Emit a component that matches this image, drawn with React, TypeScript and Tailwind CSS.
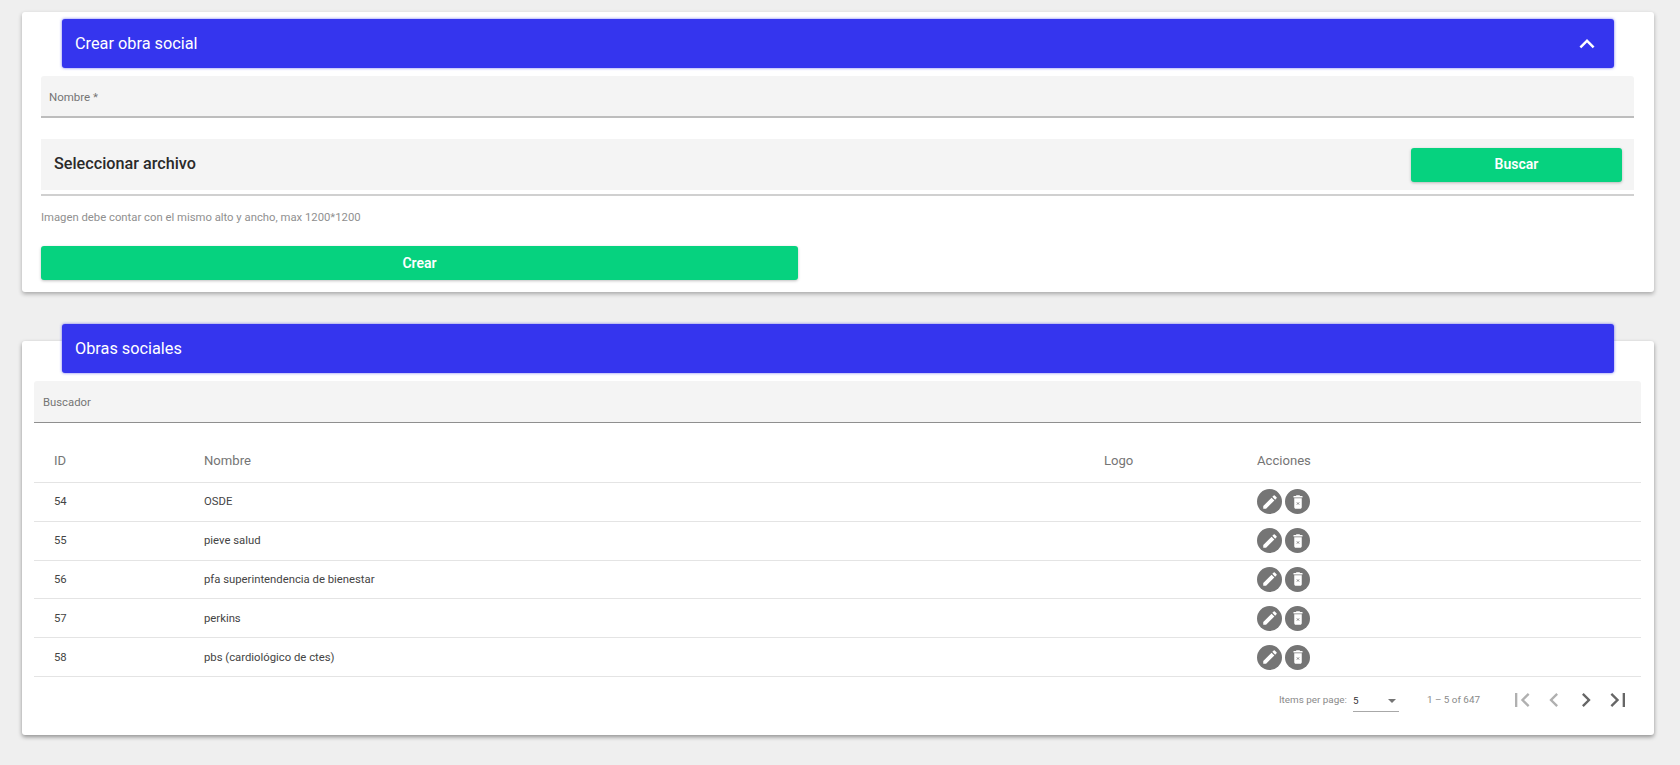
import { MdEdit, MdExpandLess, MdFirstPage, MdChevronLeft, MdChevronRight, MdLastPage } from 'react-icons/md';

const rows = [
  { id: 54, nombre: 'OSDE' },
  { id: 55, nombre: 'pieve salud' },
  { id: 56, nombre: 'pfa superintendencia de bienestar' },
  { id: 57, nombre: 'perkins' },
  { id: 58, nombre: 'pbs (cardiológico de ctes)' },
];

function TrashIcon() {
  return (
    <svg viewBox="0 0 24 24" className="w-[18px] h-[18px]">
      <path fill="white" d="M7 19c0 1.1.9 2 2 2h6c1.1 0 2-.9 2-2V7H7v12zM15 4l-1-1h-4l-1 1H6v2h12V4z" />
      <path stroke="#757575" strokeWidth="1.2" d="M10.5 12.5l3 3M13.5 12.5l-3 3" />
    </svg>
  );
}

function Header({ title, chevron }: { title: string; chevron?: boolean }) {
  return (
    <div className="mx-10 h-[49px] bg-[#3535ee] rounded-[3px] shadow-[0_0_3px_rgba(53,53,238,0.7)] flex items-center justify-between px-[13px] pt-px text-white text-[16.3px]">
      <span>{title}</span>
      {chevron && <MdExpandLess className="w-[30px] h-[30px] -mr-px" />}
    </div>
  );
}

export default function App() {
  return (
    <div className="min-h-[765px] bg-[#efefef] pl-[22px] pr-[26px] pt-3 font-['Roboto',sans-serif] text-[#212121]">
      {/* crear */}
      <div className="bg-white rounded-[3px] h-[280px] shadow-[0_2px_4px_rgba(0,0,0,0.3)] pt-[7px]">
        <Header title="Crear obra social" chevron />
        <div className="ml-[19px] mr-5 mt-2">
          <div className="h-[42px] bg-[#f4f4f4] border-b-2 border-[#bdbdbd] rounded-t-[3px] flex items-center px-2 pt-1 text-[11.5px] text-[#757575]">
            Nombre *
          </div>
          <div className="mt-[21px] h-[51px] bg-[#f4f4f4] flex items-center justify-between pl-[13px] pr-3">
            <span className="text-[16.2px] font-medium text-[#2a2a2a]">Seleccionar archivo</span>
            <button className="w-[211px] h-[34px] bg-[#06d27f] rounded-[3px] text-white text-sm font-semibold pb-px shadow-[0_1px_3px_rgba(0,0,0,0.25)]">
              Buscar
            </button>
          </div>
          <div className="mt-1 border-b-2 border-[#d0d0d0]" />
          <p className="mt-[14px] text-[11.3px] leading-4 text-[#8f8f8f]">Imagen debe contar con el mismo alto y ancho, max 1200*1200</p>
          <button className="mt-5 w-[757px] h-[34px] bg-[#06d27f] rounded-[3px] text-white text-sm font-semibold pb-px shadow-[0_1px_3px_rgba(0,0,0,0.25)]">
            Crear
          </button>
        </div>
      </div>

      {/* listado */}
      <div className="mt-[49px] bg-white rounded-[3px] h-[394px] shadow-[0_2px_4px_rgba(0,0,0,0.4)]">
        <div className="-translate-y-[17px]">
          <Header title="Obras sociales" />
          <div className="ml-3 mr-[13px] mt-2">
            <div className="h-[42px] bg-[#f4f4f4] border-b border-[#8f8f8f] rounded-t-[3px] flex items-center px-[9px] pt-1 text-[11.3px] text-[#757575]">
              Buscador
            </div>
            <div className="grid grid-cols-[150px_900px_153px_1fr] h-[60px] items-center pl-5 pt-[16px] border-b border-[#e4e4e4] text-[13.1px] text-[#757575]">
              <span>ID</span>
              <span>Nombre</span>
              <span>Logo</span>
              <span>Acciones</span>
            </div>
            {rows.map(row => (
              <div key={row.id} className="grid grid-cols-[150px_900px_153px_1fr] h-[38.8px] items-center pl-5 pt-[2px] border-b border-[#e4e4e4] text-[11.3px] text-[#444444]">
                <span>{row.id}</span>
                <span>{row.nombre}</span>
                <span />
                <div className="flex gap-[3px] -mt-[2px]">
                  <span className="w-[25px] h-[25px] rounded-full bg-[#757575] flex items-center justify-center">
                    <MdEdit className="w-[18px] h-[18px] text-white" />
                  </span>
                  <span className="w-[25px] h-[25px] rounded-full bg-[#757575] flex items-center justify-center">
                    <TrashIcon />
                  </span>
                </div>
              </div>
            ))}
            <div className="h-[46px] flex items-center justify-end pr-[9px] text-[9.9px] text-[#8a8a8a]">
              <span>Items per page:</span>
              <div className="ml-[6px] w-[46px] h-[24px] border-b border-[#a8a8a8] flex items-center justify-between text-[#333333] pt-[4px]">
                <span>5</span>
                <span className="mr-[3px] w-0 h-0 border-l-[4px] border-r-[4px] border-t-[4px] border-l-transparent border-r-transparent border-t-[#757575]" />
              </div>
              <span className="ml-7">1 – 5 of 647</span>
              <div className="ml-7 flex gap-[4px]">
                <MdFirstPage className="w-7 h-7 text-[#b0b0b0]" />
                <MdChevronLeft className="w-7 h-7 text-[#b0b0b0]" />
                <MdChevronRight className="w-7 h-7 text-[#666666]" />
                <MdLastPage className="w-7 h-7 text-[#666666]" />
              </div>
            </div>
          </div>
        </div>
      </div>
    </div>
  );
}
